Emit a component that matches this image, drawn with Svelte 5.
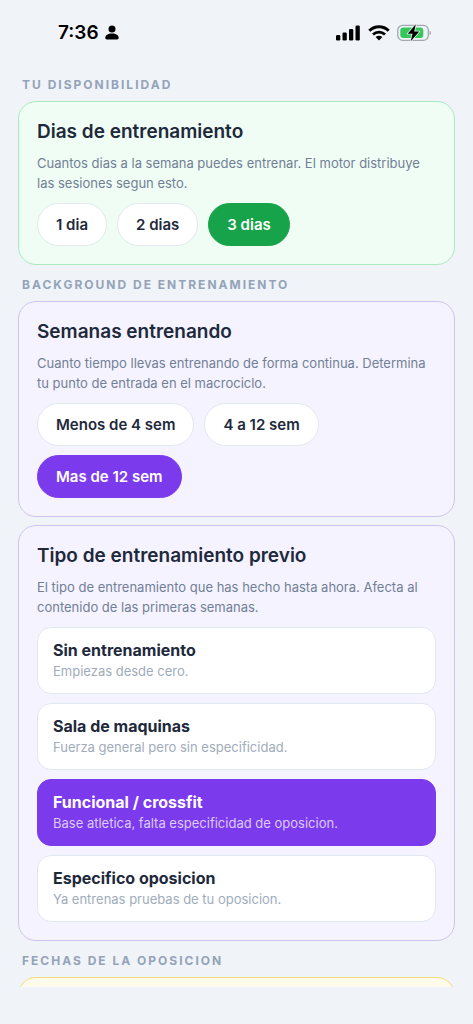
<script>
  const previousTypes = [
    { title: 'Sin entrenamiento', note: 'Empiezas desde cero.' },
    { title: 'Sala de maquinas', note: 'Fuerza general pero sin especificidad.' },
    { title: 'Funcional / crossfit', note: 'Base atletica, falta especificidad de oposicion.' },
    { title: 'Especifico oposicion', note: 'Ya entrenas pruebas de tu oposicion.' }
  ];
  const dayOptions = ['1 dia', '2 dias', '3 dias'];
  const weekOptions = ['Menos de 4 sem', '4 a 12 sem', 'Mas de 12 sem'];

  let days = $state('3 dias');
  let weeks = $state('Mas de 12 sem');
  let previous = $state('Funcional / crossfit');
</script>

<div class="screen">
  <header class="status">
    <div class="clock">
      <span>7:36</span>
      <svg width="14" height="15" viewBox="0 0 14 15" aria-hidden="true">
        <circle cx="7" cy="4" r="3.500" />
        <path d="M.3 12.800C.3 10.200 3 8.400 7 8.400s6.700 1.800 6.700 4.400c0 1.200-.6 1.700-1.700 1.700H2C.9 14.500.3 14 .3 12.800Z" />
      </svg>
    </div>
    <div class="signals">
      <svg width="25" height="16" viewBox="0 0 25 16" aria-hidden="true">
        <rect x="0" y="10" width="4.300" height="5.500" rx="1.300" />
        <rect x="6.500" y="7.500" width="4.300" height="8" rx="1.300" />
        <rect x="13" y="4" width="4.300" height="11.500" rx="1.300" />
        <rect x="19.500" y="0.500" width="4.300" height="15" rx="1.300" />
      </svg>
      <svg width="22" height="16" viewBox="0 0 22 16" aria-hidden="true">
        <path d="M1.300 5.700C6.700.4 15.300.4 20.700 5.700" fill="none" stroke="#000" stroke-width="2.900" />
        <path d="M5 9.600c3.400-3.200 8.600-3.200 12 0" fill="none" stroke="#000" stroke-width="2.800" />
        <path d="M7.600 12c2-1.700 4.800-1.700 6.800 0L11 15.500Z" />
      </svg>
      <svg width="35" height="18" viewBox="0 0 35 18" aria-hidden="true">
        <rect x=".8" y="1.300" width="30.500" height="15" rx="4.800" fill="none" stroke="#a3a8ac" stroke-width="1.300" />
        <path d="M32.600 6.500c1.900.7 1.900 4.100 0 4.800Z" fill="#a3a8ac" />
        <rect x="3.300" y="3.500" width="23" height="10.600" rx="3" fill="#35c759" />
        <path d="M18.800.3 10.700 9.700h4.800L13.700 17.300 22.300 7.500h-5.100Z" stroke="#e4f5ea" stroke-width="1.600" paint-order="stroke" stroke-linejoin="round" />
      </svg>
    </div>
  </header>

  <main>
    <h2>TU DISPONIBILIDAD</h2>
    <section class="card green">
      <h3>Dias de entrenamiento</h3>
      <p>Cuantos dias a la semana puedes entrenar. El motor distribuye las sesiones segun esto.</p>
      <div class="pills">
        {#each dayOptions as option}
          <button class="pill" class:active={days === option} aria-pressed={days === option} onclick={() => (days = option)}>{option}</button>
        {/each}
      </div>
    </section>

    <h2>BACKGROUND DE ENTRENAMIENTO</h2>
    <div class="stack">
      <section class="card violet">
        <h3>Semanas entrenando</h3>
        <p>Cuanto tiempo llevas entrenando de forma continua. Determina tu punto de entrada en el macrociclo.</p>
        <div class="pills">
          {#each weekOptions as option}
            <button class="pill" class:active={weeks === option} aria-pressed={weeks === option} onclick={() => (weeks = option)}>{option}</button>
          {/each}
        </div>
      </section>

      <section class="card violet">
        <h3>Tipo de entrenamiento previo</h3>
        <p>El tipo de entrenamiento que has hecho hasta ahora. Afecta al contenido de las primeras semanas.</p>
        <div class="options">
          {#each previousTypes as type}
            <button class="option" class:active={previous === type.title} aria-pressed={previous === type.title} onclick={() => (previous = type.title)}>
              <strong>{type.title}</strong>
              <span>{type.note}</span>
            </button>
          {/each}
        </div>
      </section>
    </div>

    <h2>FECHAS DE LA OPOSICION</h2>
    <section class="card yellow"></section>
  </main>
</div>

<style>
  :global(body) {
    margin: 0;
    background: #f0f4f9;
  }

  .screen {
    box-sizing: border-box;
    display: flex;
    flex-direction: column;
    height: 100vh;
    padding-bottom: 37px;
    background: #f0f4f9;
    color: #1e293b;
    font-family: Inter, "Liberation Sans", sans-serif;
  }

  .status {
    display: flex;
    flex: none;
    align-items: center;
    justify-content: space-between;
    height: 65px;
    padding: 0 41px 0 58px;
    color: #000;
  }

  .clock,
  .signals {
    display: flex;
    align-items: center;
  }

  .clock {
    gap: 6px;
    font-size: 19px;
    font-weight: 600;
  }

  .signals {
    gap: 7px;
  }

  main {
    flex: 1;
    min-height: 0;
    padding: 0 18px;
    overflow-y: auto;
    scrollbar-width: none;
  }

  h2 {
    margin: 0;
    padding: 12px 4px 8px;
    color: #94a3b8;
    font-size: 12px;
    font-weight: 700;
    line-height: 16px;
    letter-spacing: 2px;
  }

  .stack {
    display: flex;
    flex-direction: column;
    gap: 8px;
  }

  .card {
    padding: 18px;
    border: 1px solid;
    border-radius: 18px;
  }

  .green {
    --accent: #16a34a;
    border-color: #a7ebbf;
    background: #f0fdf4;
  }

  .violet {
    --accent: #7c3aed;
    border-color: #cfc3ee;
    background: #f5f3ff;
  }

  .yellow {
    border-color: #f3dc7c;
    background: #fffbeb;
  }

  h3 {
    margin: 0 0 9px;
    font-size: 19px;
    font-weight: 600;
    line-height: 24px;
  }

  p {
    margin: 0 0 10px;
    color: #718096;
    font-size: 13px;
    line-height: 20px;
  }

  .pills {
    display: flex;
    flex-wrap: wrap;
    gap: 9px 10px;
  }

  button {
    border: 1px solid #e2e8f0;
    background: #fff;
    color: inherit;
    font-family: inherit;
    cursor: pointer;
  }

  .pill {
    padding: 10px 18px;
    border-radius: 22px;
    font-size: 15px;
    font-weight: 600;
    line-height: 21px;
  }

  .options {
    display: flex;
    flex-direction: column;
    gap: 9px;
  }

  .option {
    display: flex;
    flex-direction: column;
    gap: 2px;
    padding: 12px 15px 13px;
    border-radius: 14px;
    text-align: left;
  }

  .option strong {
    font-size: 16px;
    font-weight: 700;
    line-height: 20px;
  }

  .option span {
    color: #a0acbc;
    font-size: 13px;
    line-height: 18px;
  }

  .active {
    border-color: var(--accent);
    background: var(--accent);
    color: #fff;
  }

  .option.active span {
    color: #dccbfb;
  }
</style>
